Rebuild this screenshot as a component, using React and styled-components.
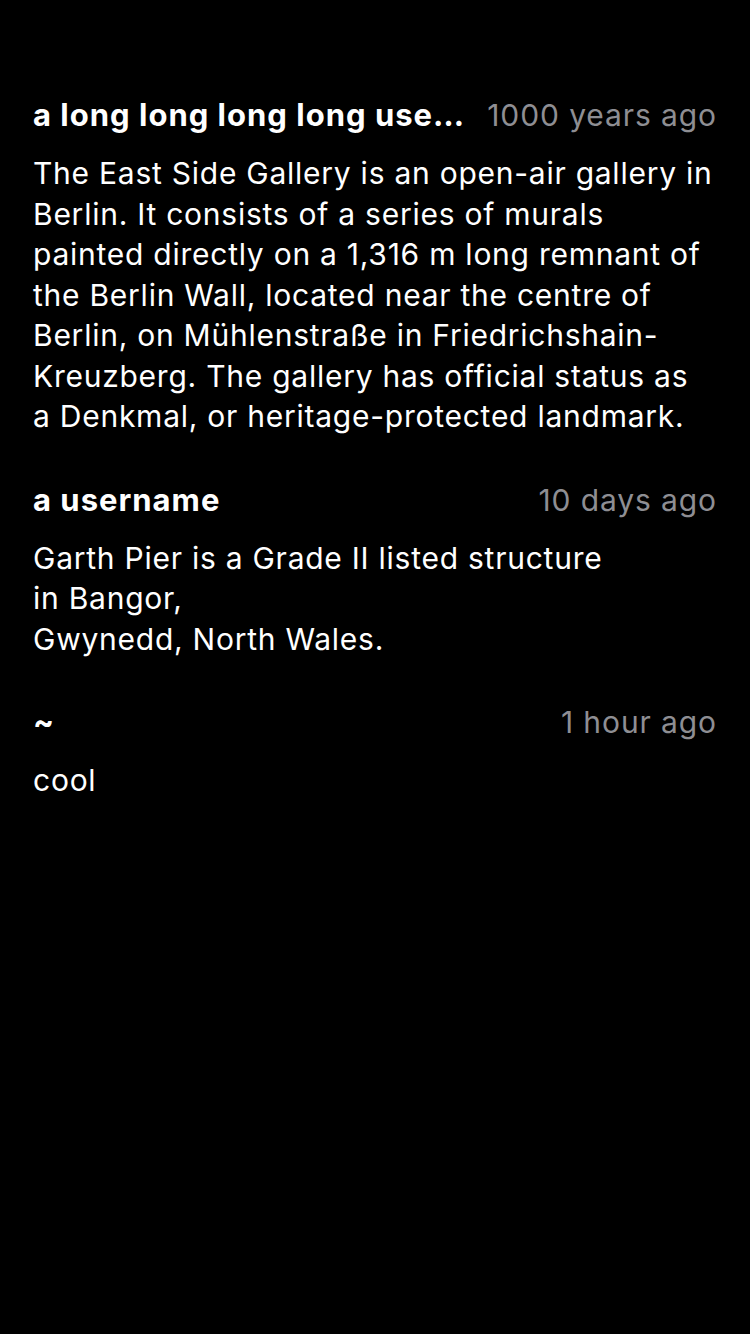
import React from "react";
import styled, { createGlobalStyle } from "styled-components";

const GlobalStyle = createGlobalStyle`
   html, body {
      margin: 0;
      padding: 0;
      background: #000000;
   }
   body {
      font-family: Inter, "Liberation Sans", sans-serif;
      -webkit-font-smoothing: antialiased;
   }
`;

// line breaks kept as they show on the device
const comments = [
   {
      user: "a long long long long username that goes on",
      time: "1000 years ago",
      text: [
         "The East Side Gallery is an open-air gallery in",
         "Berlin. It consists of a series of murals",
         "painted directly on a 1,316 m long remnant of",
         "the Berlin Wall, located near the centre of",
         "Berlin, on Mühlenstraße in Friedrichshain-",
         "Kreuzberg. The gallery has official status as",
         "a Denkmal, or heritage-protected landmark.",
      ].join("\n"),
   },
   {
      user: "a username",
      time: "10 days ago",
      text: "Garth Pier is a Grade II listed structure\nin Bangor,\nGwynedd, North Wales.",
   },
   {
      user: "~",
      time: "1 hour ago",
      text: "cool",
   },
];

function App() {
   return (
      <>
         <GlobalStyle />
         <Page>
            {comments.map((c, i) => (
               <Comment key={i}>
                  <Header>
                     <Username>{c.user}</Username>
                     <Time>{c.time}</Time>
                  </Header>
                  <Body>{c.text}</Body>
               </Comment>
            ))}
         </Page>
      </>
   );
}

export default App;

const Page = styled.main`
   min-height: 1334px;
   box-sizing: border-box;
   padding: 95px 33px 0 33px;
   display: flex;
   flex-direction: column;
   gap: 43px;
   background: #000000;
`;

const Comment = styled.section`
   display: flex;
   flex-direction: column;
   gap: 18px;
`;

const Header = styled.div`
   display: flex;
   align-items: center;
   gap: 22px;
   height: 40px;
`;

const Username = styled.div`
   flex: 1;
   min-width: 0;
   color: #ffffff;
   font-size: 31px;
   font-weight: 700;
   line-height: 40px;
   letter-spacing: 1px;
   white-space: nowrap;
   overflow: hidden;
   text-overflow: ellipsis;
`;

const Time = styled.div`
   flex-shrink: 0;
   color: #8e8e93;
   font-size: 30px;
   line-height: 40px;
   letter-spacing: 0.9px;
`;

const Body = styled.p`
   margin: 0;
   color: #ffffff;
   font-size: 30px;
   line-height: 40.5px;
   letter-spacing: 0.75px;
   white-space: pre-line;
`;
